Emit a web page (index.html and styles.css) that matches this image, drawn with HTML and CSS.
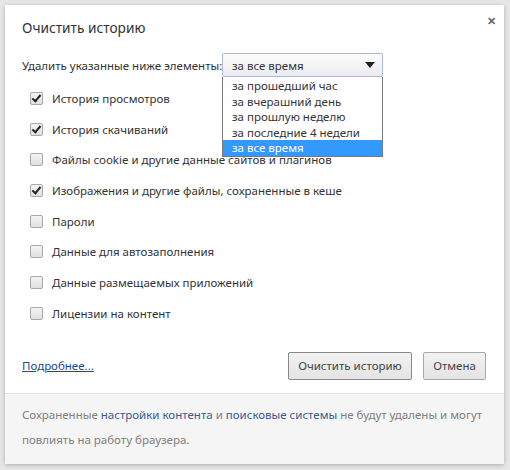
FILE: index.html
```html
<!DOCTYPE html>
<html lang="ru">
<head>
<meta charset="utf-8">
<link rel="stylesheet" href="styles.css">
</head>
<body>
<div class="dialog">
  <div class="main">
    <div class="close">&#x2715;</div>
    <h1 class="title">Очистить историю</h1>
    <div class="select-row">
      <span class="select-label">Удалить указанные ниже элементы:</span>
      <div class="select-wrap">
        <div class="select">
          <span>за все время</span>
          <svg class="arrow" width="10" height="6" viewBox="0 0 10 6"><path d="M0 0H10L5 6Z" fill="#222"/></svg>
        </div>
        <ul class="options">
          <li>за прошедший час</li>
          <li>за вчерашний день</li>
          <li>за прошлую неделю</li>
          <li>за последние 4 недели</li>
          <li class="selected">за все время</li>
        </ul>
      </div>
    </div>
    <ul class="checks">
      <li><span class="cb on"></span>История просмотров</li>
      <li><span class="cb on"></span>История скачиваний</li>
      <li><span class="cb"></span>Файлы cookie и другие данные сайтов и плагинов</li>
      <li><span class="cb on"></span>Изображения и другие файлы, сохраненные в кеше</li>
      <li><span class="cb"></span>Пароли</li>
      <li><span class="cb"></span>Данные для автозаполнения</li>
      <li><span class="cb"></span>Данные размещаемых приложений</li>
      <li><span class="cb"></span>Лицензии на контент</li>
    </ul>
    <div class="actions">
      <a class="more" href="#">Подробнее...</a>
      <div class="buttons">
        <button class="btn btn-clear">Очистить историю</button>
        <button class="btn btn-cancel">Отмена</button>
      </div>
    </div>
  </div>
  <div class="footer">
    <p class="note">Сохраненные <a href="#">настройки контента</a> и <a href="#">поисковые системы</a> не будут удалены и могут</p>
    <p class="note">повлиять на работу браузера.</p>
  </div>
</div>
</body>
</html>
```

FILE: styles.css
```css
html, body {
  margin: 0;
  padding: 0;
}
body {
  background: #e6e6e6;
  padding: 5px 6px 6px 5px;
  font-family: "Noto Sans", "Open Sans", sans-serif;
  font-size: 11.5px;
  color: #333;
}
.dialog {
  width: 499px;
  height: 459px;
  background: #fff;
  box-shadow: 0 1px 4px rgba(0,0,0,0.25);
  display: flex;
  flex-direction: column;
}
.main {
  position: relative;
  flex: 1;
  padding: 12px 18px 0 17px;
}
.close {
  position: absolute;
  top: 8px;
  right: 8px;
  font-size: 11px;
  font-weight: bold;
  color: #666;
}
.title {
  margin: 0;
  font-size: 13.7px;
  font-weight: normal;
  line-height: 22px;
  color: #333;
}
.select-row {
  display: flex;
  align-items: center;
  margin-top: 14px;
  height: 24px;
}
.select-label {
  flex: none;
  width: 200px;
  white-space: nowrap;
}
.select-wrap {
  position: relative;
}
.select {
  box-sizing: border-box;
  width: 161px;
  height: 24px;
  border: 1px solid #a9bbd4;
  border-radius: 2px;
  background: linear-gradient(#fcfcfc, #ececec);
  display: flex;
  align-items: center;
  justify-content: space-between;
  padding: 0 7px 0 9px;
}
.options {
  position: absolute;
  top: 24px;
  left: 0;
  box-sizing: border-box;
  width: 161px;
  margin: 0;
  padding: 1px 0 0;
  list-style: none;
  background: #fff;
  border: 1px solid #7a7a7a;
  border-top: none;
  z-index: 2;
}
.options li {
  height: 15.6px;
  line-height: 15.6px;
  padding-left: 9px;
  white-space: nowrap;
}
.options li.selected {
  background: #3399ff;
  color: #fff;
}
.checks {
  list-style: none;
  margin: 6px 0 0;
  padding: 0;
}
.checks li {
  display: flex;
  align-items: center;
  height: 30.7px;
  padding-left: 8px;
}
.cb {
  box-sizing: border-box;
  width: 13px;
  height: 13px;
  border: 1px solid #a8a8a8;
  border-radius: 2px;
  background: linear-gradient(#f4f4f4, #e0e0e0);
  margin-right: 9px;
  position: relative;
  flex: none;
}
.cb.on::after {
  content: "";
  position: absolute;
  left: 3px;
  top: 0px;
  width: 3px;
  height: 7px;
  border: solid #222;
  border-width: 0 2px 2px 0;
  transform: rotate(40deg);
}
.actions {
  display: flex;
  align-items: center;
  justify-content: space-between;
  margin-top: 23px;
}
.more {
  color: #1c4a8c;
  text-decoration: underline;
}
.buttons {
  display: flex;
  gap: 11px;
}
.btn {
  font-family: inherit;
  font-size: 11.5px;
  color: #444;
  height: 28px;
  border: 1px solid #a8a8a8;
  border-radius: 2px;
  background: linear-gradient(#f2f2f2, #e4e4e4);
  padding: 0;
}
.btn-clear { width: 124px; border-color: #888; }
.btn-cancel { width: 63px; }
.footer {
  height: 71px;
  box-sizing: border-box;
  background: #f5f5f5;
  border-top: 1px solid #e2e2e2;
  padding: 8px 20px 0 17px;
  color: #808080;
}
.note {
  margin: 0;
  height: 25px;
  line-height: 25px;
  white-space: nowrap;
}
.footer a {
  color: #3b5b8e;
  text-decoration: none;
}
```
